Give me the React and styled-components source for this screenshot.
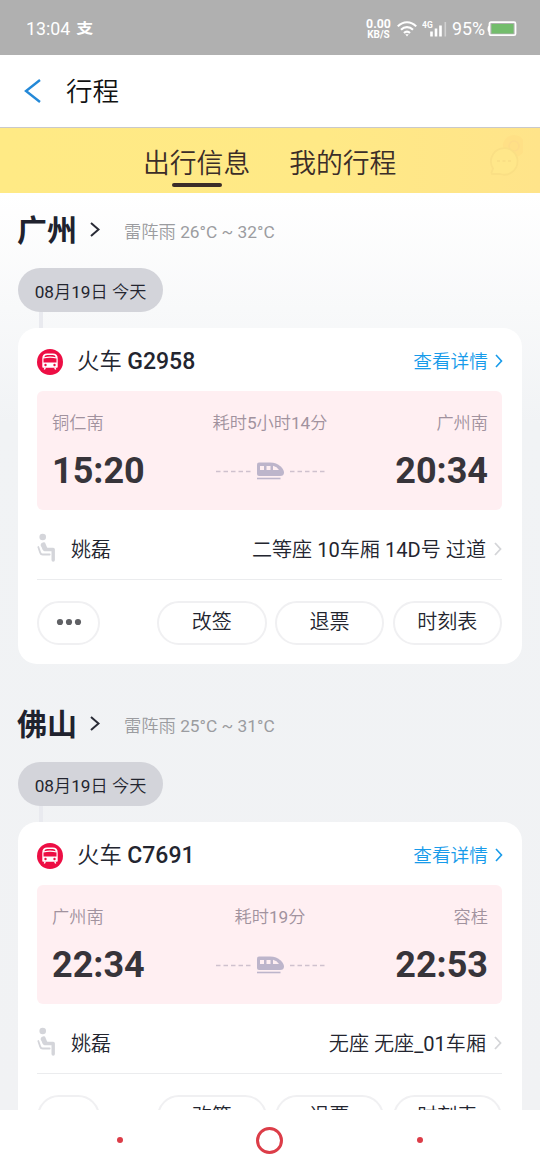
import React from 'react';
import styled, { createGlobalStyle } from 'styled-components';

const GlobalStyle = createGlobalStyle`
  * { box-sizing: border-box; }
  body { margin: 0; background: #fff; }
  button { font: inherit; color: inherit; background: none; border: 0; padding: 0; }
`;

const Screen = styled.div`
  display: flex;
  flex-direction: column;
  width: 540px;
  height: 1170px;
  overflow: hidden;
  background: #fff;
  color: #23252f;
  font-family: Roboto, 'Noto Sans CJK SC', sans-serif;
  font-weight: 400;
  white-space: nowrap;
  svg { display: block; flex: none; }
`;

const StatusBar = styled.div`
  flex: none;
  display: flex;
  align-items: center;
  justify-content: space-between;
  height: 55px;
  padding: 2px 23px 0 26px;
  background: #b0b0b0;
  color: #fff;
  font-size: 17.8px;
`;

const StatusGroup = styled.div`
  display: flex;
  align-items: center;
`;

const PayMark = styled.span`
  margin: -2px 0 0 6px;
  font-size: 17px;
  font-weight: 700;
  line-height: 20px;
  transform: scaleY(0.8);
`;

const NetSpeed = styled.div`
  width: 27px;
  margin-right: 5px;
  text-align: center;
  font-weight: 700;
`;

const SpeedValue = styled.div`
  font-size: 12.3px;
  line-height: 11px;
`;

const SpeedUnit = styled.div`
  font-size: 10px;
  line-height: 9px;
`;

const Percent = styled.span`
  margin: 0 2px 0 5px;
  font-size: 17.8px;
`;

const TitleBar = styled.header`
  flex: none;
  display: flex;
  align-items: center;
  height: 73px;
  padding: 0 24px;
  border-bottom: 1px solid #c9c9cb;
  color: #111;
  font-size: 26.5px;
  line-height: 40px;
`;

const PageTitle = styled.h1`
  margin: 1px 0 0 25px;
  font-size: inherit;
  font-weight: 350;
`;

const TabBar = styled.nav`
  flex: none;
  display: flex;
  align-items: flex-start;
  height: 65px;
  padding: 17px 16px 0 143px;
  background: linear-gradient(90deg, #ffea85 0%, #ffe986 60%, #ffe48a 100%);
`;

const Tab = styled.button`
  display: flex;
  flex-direction: column;
  align-items: center;
  margin-right: 39px;
  color: #3b2d28;
  font-size: 26.8px;
  font-weight: 350;
  line-height: 38px;
  &::after {
    content: '';
    width: 50px;
    height: 4px;
    border-radius: 2px;
    background: ${(p) => (p.$active ? '#3b2d28' : 'transparent')};
  }
`;

const ChatMark = styled.div`
  margin: -14px 1px 0 auto;
`;

const Feed = styled.main`
  flex: none;
  height: 917px;
  overflow: hidden;
  padding: 0 18px;
  background: linear-gradient(180deg, #fff 0, #f1f3f5 230px, #f1f2f4 100%);
`;

const CitySection = styled.section`
  height: 494px;
  font-weight: 350;
`;

const LatinRun = styled.span`
  font-weight: 400;
`;

const CityRow = styled.div`
  display: flex;
  align-items: center;
  height: 75px;
`;

const CityName = styled.h2`
  margin: 0 13px 0 -1px;
  font-size: 30px;
  font-weight: 700;
  line-height: 44px;
  color: #20222e;
`;

const CityArrow = styled.span`
  margin-top: -2px;
`;

const Weather = styled.span`
  margin: 0 0 0 24px;
  color: #9b9ca0;
  font-size: 17.3px;
`;

const DatePill = styled.div`
  width: 145px;
  height: 44px;
  border-radius: 22px;
  background: #d3d4da;
  text-align: center;
  font-size: 17.2px;
  line-height: 48px;
`;

const Connector = styled.div`
  width: 4px;
  height: 16px;
  margin-left: 21px;
  background: #e9eaef;
`;

const Card = styled.article`
  height: 336px;
  padding: 0 20px 0 19px;
  border-radius: 19px;
  background: #fff;
`;

const CardHeader = styled.div`
  display: flex;
  align-items: center;
  height: 63px;
  padding-top: 4px;
`;

const TrainTitle = styled.h3`
  margin: -1px 0 0 14px;
  font-size: 22.4px;
  font-weight: 350;
  line-height: 32px;
  b {
    font-size: 23px;
    font-weight: 500;
  }
`;

const DetailLink = styled.button`
  display: flex;
  align-items: center;
  gap: 7px;
  margin: -1px -1px 0 auto;
  color: #179bea;
  font-size: 18.7px;
`;

const LinkText = styled.span`
  margin-top: -3px;
`;

const TripBox = styled.div`
  display: grid;
  grid-template-columns: 1fr 116px 1fr;
  grid-template-rows: 26px 44px;
  row-gap: 13px;
  height: 119px;
  padding: 19px 14px 0 15px;
  border-radius: 6px;
  background: #ffeff2;
`;

const TripLabel = styled.span`
  color: #a1929e;
  font-size: 17.2px;
  line-height: 26px;
  text-align: ${(p) => p.$align || 'left'};
`;

const TripTime = styled.span`
  color: #37343a;
  font-size: 36px;
  font-weight: 700;
  line-height: 44px;
  text-align: ${(p) => p.$align || 'left'};
`;

const Route = styled.div`
  display: flex;
  align-items: center;
  justify-content: center;
`;

const PassengerRow = styled.div`
  display: flex;
  align-items: center;
  height: 70px;
  padding-top: 7px;
  border-bottom: 1px solid #ebecee;
  font-size: 20px;
`;

const PassengerName = styled.span`
  margin-left: 15px;
`;

const Seat = styled.span`
  margin: 0 8px 0 auto;
  font-size: 20.1px;
`;

const SeatArrow = styled.span`
  margin-top: 2px;
`;

const Actions = styled.div`
  display: flex;
  align-items: center;
  justify-content: flex-end;
  gap: 8.250px;
  padding-top: 21px;
`;

const PillButton = styled.button`
  display: flex;
  align-items: center;
  justify-content: center;
  width: ${(p) => (p.$more ? 63 : 109.5)}px;
  height: 44px;
  padding-bottom: ${(p) => (p.$more ? 2 : 5)}px;
  margin-right: ${(p) => (p.$more ? 'auto' : 0)};
  border: 2px solid #f0f0f2;
  border-radius: 22px;
  font-size: 20px;
`;

const SystemNav = styled.footer`
  display: flex;
  align-items: center;
  justify-content: center;
  gap: 133.5px;
  height: 60px;
  padding-right: 1px;
  background: #fff;
`;

const NavDot = styled.span`
  width: 6px;
  height: 6px;
  border-radius: 50%;
  background: #dc3d48;
`;

const NavHome = styled.span`
  width: 27px;
  height: 27px;
  border: 3px solid #dc3d48;
  border-radius: 50%;
`;

const Chevron = ({ w, h, color, stroke, left }) => (
  <svg width={w} height={h} viewBox={`0 0 ${w} ${h}`} fill="none" stroke={color} strokeWidth={stroke}>
    <path d={left ? `M${w - 1} 1L2 ${h / 2}L${w - 1} ${h - 1}` : `M1 1L${w - 1.5} ${h / 2}L1 ${h - 1}`} />
  </svg>
);

const WifiIcon = () => (
  <svg width="25" height="16" viewBox="0 0 25 16" fill="none" stroke="#fff" strokeWidth="2.1">
    <path d="M.8 5.400C6-.2 14-.2 19.200 5.400M4 8.800c3.500-3.600 8.500-3.600 12 0M7 12c1.700-1.800 4.300-1.800 6 0" />
    <path d="M8.300 13.300h3.400L10 15.500z" fill="#fff" stroke="none" />
  </svg>
);

const SignalIcon = () => (
  <svg width="25" height="18" viewBox="0 0 25 18">
    <text x="0" y="8" fill="#fff" fontFamily="Roboto, sans-serif" fontWeight="700" fontSize="8.500">4G</text>
    <path d="M9.500 11.500v5M14 8.500v8M18.500 5.500v11" stroke="#fff" strokeWidth="2.600" />
    <path d="M23.300 2v14.500" stroke="#d0d0d0" strokeWidth="1.600" />
  </svg>
);

const BatteryIcon = () => (
  <svg width="30" height="16" viewBox="0 0 30 16">
    <rect x="2.500" y="1.200" width="26" height="13" rx="1.500" fill="none" stroke="#fff" strokeWidth="1.800" />
    <path d="M2 4.500Q.5 5 .5 8T2 11.500z" fill="#fff" />
    <rect x="4.500" y="3" width="22" height="9.500" fill="#73bd6c" />
  </svg>
);

const ChatIcon = () => (
  <svg width="38" height="48" viewBox="0 0 38 48" fill="none">
    <circle cx="29" cy="15" r="11" fill="#ffe086" />
    <circle cx="29" cy="15" r="5" stroke="#fddb88" strokeWidth="1.500" />
    <path d="M6.500 41.500l1.500-4A13.300 13.300 0 1 1 15 43H7z" fill="#ffe78a" stroke="#fadf85" strokeWidth="1.800" />
    <path d="M12 30h3M17.500 30h3M23 30h3" stroke="#fadf85" strokeWidth="2.200" />
  </svg>
);

const TrainBadge = () => (
  <svg width="26" height="26" viewBox="0 0 26 26">
    <circle cx="13" cy="13" r="13" fill="#ed0e44" />
    <path d="M5.300 18V9.500Q5.300 4.600 10.200 4.600h5.600q4.900 0 4.900 4.900V18q0 .8-.8.8H6.100q-.8 0-.8-.8z" fill="#fff" />
    <path d="M7.200 8.200Q7.800 5.900 10.300 5.900h5.400q2.500 0 3.100 2.300Q13 6.800 7.200 8.200z" fill="#ed0e44" />
    <path d="M6.500 13.500V9.600Q13 8 19.500 9.600v3.900z" fill="#ed0e44" />
    <circle cx="8.500" cy="16" r="1.200" fill="#ed0e44" />
    <circle cx="17.500" cy="16" r="1.200" fill="#ed0e44" />
    <path d="M8.300 18.500L7.300 20.500M17.700 18.500l1 2" stroke="#fff" strokeWidth="1.500" />
  </svg>
);

const RouteIcon = () => (
  <svg width="112" height="20" viewBox="0 0 112 20">
    <path d="M2 10.500h35M76 10.500h35" stroke="#cfc1ce" strokeWidth="1.500" strokeDasharray="4.500 3" />
    <path d="M43 3.500Q43 1.500 45 1.500h11C65 1.500 70 8 70 11.500q0 3.500-4 3.500H45q-2 0-2-2z" fill="#bdb5cb" />
    <path d="M46 5h4v4h-4zM52.500 5h4v4h-4zM59 4.800q4 1 6 4.200h-6z" fill="#ffeff2" />
    <path d="M43 17.500h23.500" stroke="#bdb5cb" strokeWidth="1.600" />
  </svg>
);

const SeatIcon = () => (
  <svg width="19" height="30" viewBox="0 0 19 30" fill="none" stroke="#d4d5da" strokeLinecap="round" strokeLinejoin="round">
    <circle cx="5.700" cy="4" r="3.300" fill="#d4d5da" stroke="none" />
    <path d="M5.900 11.800l1.600 4.700h8.700V27" strokeWidth="3.400" />
    <path d="M3.500 12Q4.500 8.500 8 9.500L10.500 15.500 6 17z" fill="#d4d5da" stroke="none" />
    <path d="M1.300 14l1.900 5.600q.6 1.900 2.500 1.900h7" strokeWidth="1.800" />
  </svg>
);

const MoreIcon = () => (
  <svg width="26" height="8" viewBox="0 0 26 8" fill="#606165">
    <circle cx="4" cy="4" r="3.100" />
    <circle cx="13" cy="4" r="3.100" />
    <circle cx="22" cy="4" r="3.100" />
  </svg>
);

// Latin letters and digits keep the regular weight beside the lighter Chinese text.
const Mixed = ({ children }) =>
  children
    .split(/([\u0020-\u00ff]+)/)
    .filter(Boolean)
    .map((run, i) => (run.charCodeAt(0) < 256 ? <LatinRun key={i}>{run}</LatinRun> : run));

const trips = [
  {
    city: '广州', weather: '雷阵雨 26°C ~ 32°C', train: 'G2958',
    from: '铜仁南', to: '广州南', duration: '耗时5小时14分',
    depart: '15:20', arrive: '20:34', seat: '二等座 10车厢 14D号 过道',
  },
  {
    city: '佛山', weather: '雷阵雨 25°C ~ 31°C', train: 'C7691',
    from: '广州南', to: '容桂', duration: '耗时19分',
    depart: '22:34', arrive: '22:53', seat: '无座 无座_01车厢',
  },
];

const Trip = ({ trip }) => (
  <CitySection>
    <CityRow>
      <CityName>{trip.city}</CityName>
      <CityArrow><Chevron w={10} h={15} color="#292b36" stroke={2} /></CityArrow>
      <Weather><Mixed>{trip.weather}</Mixed></Weather>
    </CityRow>
    <DatePill><Mixed>08月19日 今天</Mixed></DatePill>
    <Connector />
    <Card>
      <CardHeader>
        <TrainBadge />
        <TrainTitle>火车 <b>{trip.train}</b></TrainTitle>
        <DetailLink>
          <LinkText>查看详情</LinkText>
          <Chevron w={8} h={14} color="#179bea" stroke={1.6} />
        </DetailLink>
      </CardHeader>
      <TripBox>
        <TripLabel>{trip.from}</TripLabel>
        <TripLabel $align="center"><Mixed>{trip.duration}</Mixed></TripLabel>
        <TripLabel $align="right">{trip.to}</TripLabel>
        <TripTime>{trip.depart}</TripTime>
        <Route><RouteIcon /></Route>
        <TripTime $align="right">{trip.arrive}</TripTime>
      </TripBox>
      <PassengerRow>
        <SeatIcon />
        <PassengerName>姚磊</PassengerName>
        <Seat><Mixed>{trip.seat}</Mixed></Seat>
        <SeatArrow><Chevron w={8} h={14} color="#d4d5d8" stroke={1.8} /></SeatArrow>
      </PassengerRow>
      <Actions>
        <PillButton $more aria-label="更多"><MoreIcon /></PillButton>
        <PillButton>改签</PillButton>
        <PillButton>退票</PillButton>
        <PillButton>时刻表</PillButton>
      </Actions>
    </Card>
  </CitySection>
);

export default function App() {
  return (
    <Screen>
      <GlobalStyle />
      <StatusBar>
        <StatusGroup>
          13:04
          <PayMark>支</PayMark>
        </StatusGroup>
        <StatusGroup>
          <NetSpeed>
            <SpeedValue>0.00</SpeedValue>
            <SpeedUnit>KB/S</SpeedUnit>
          </NetSpeed>
          <WifiIcon />
          <SignalIcon />
          <Percent>95%</Percent>
          <BatteryIcon />
        </StatusGroup>
      </StatusBar>
      <TitleBar>
        <Chevron w={17} h={24} color="#2489d8" stroke={2.4} left />
        <PageTitle>行程</PageTitle>
      </TitleBar>
      <TabBar>
        <Tab $active>出行信息</Tab>
        <Tab>我的行程</Tab>
        <ChatMark><ChatIcon /></ChatMark>
      </TabBar>
      <Feed>
        {trips.map((trip) => <Trip key={trip.train} trip={trip} />)}
      </Feed>
      <SystemNav>
        <NavDot />
        <NavHome />
        <NavDot />
      </SystemNav>
    </Screen>
  );
}
